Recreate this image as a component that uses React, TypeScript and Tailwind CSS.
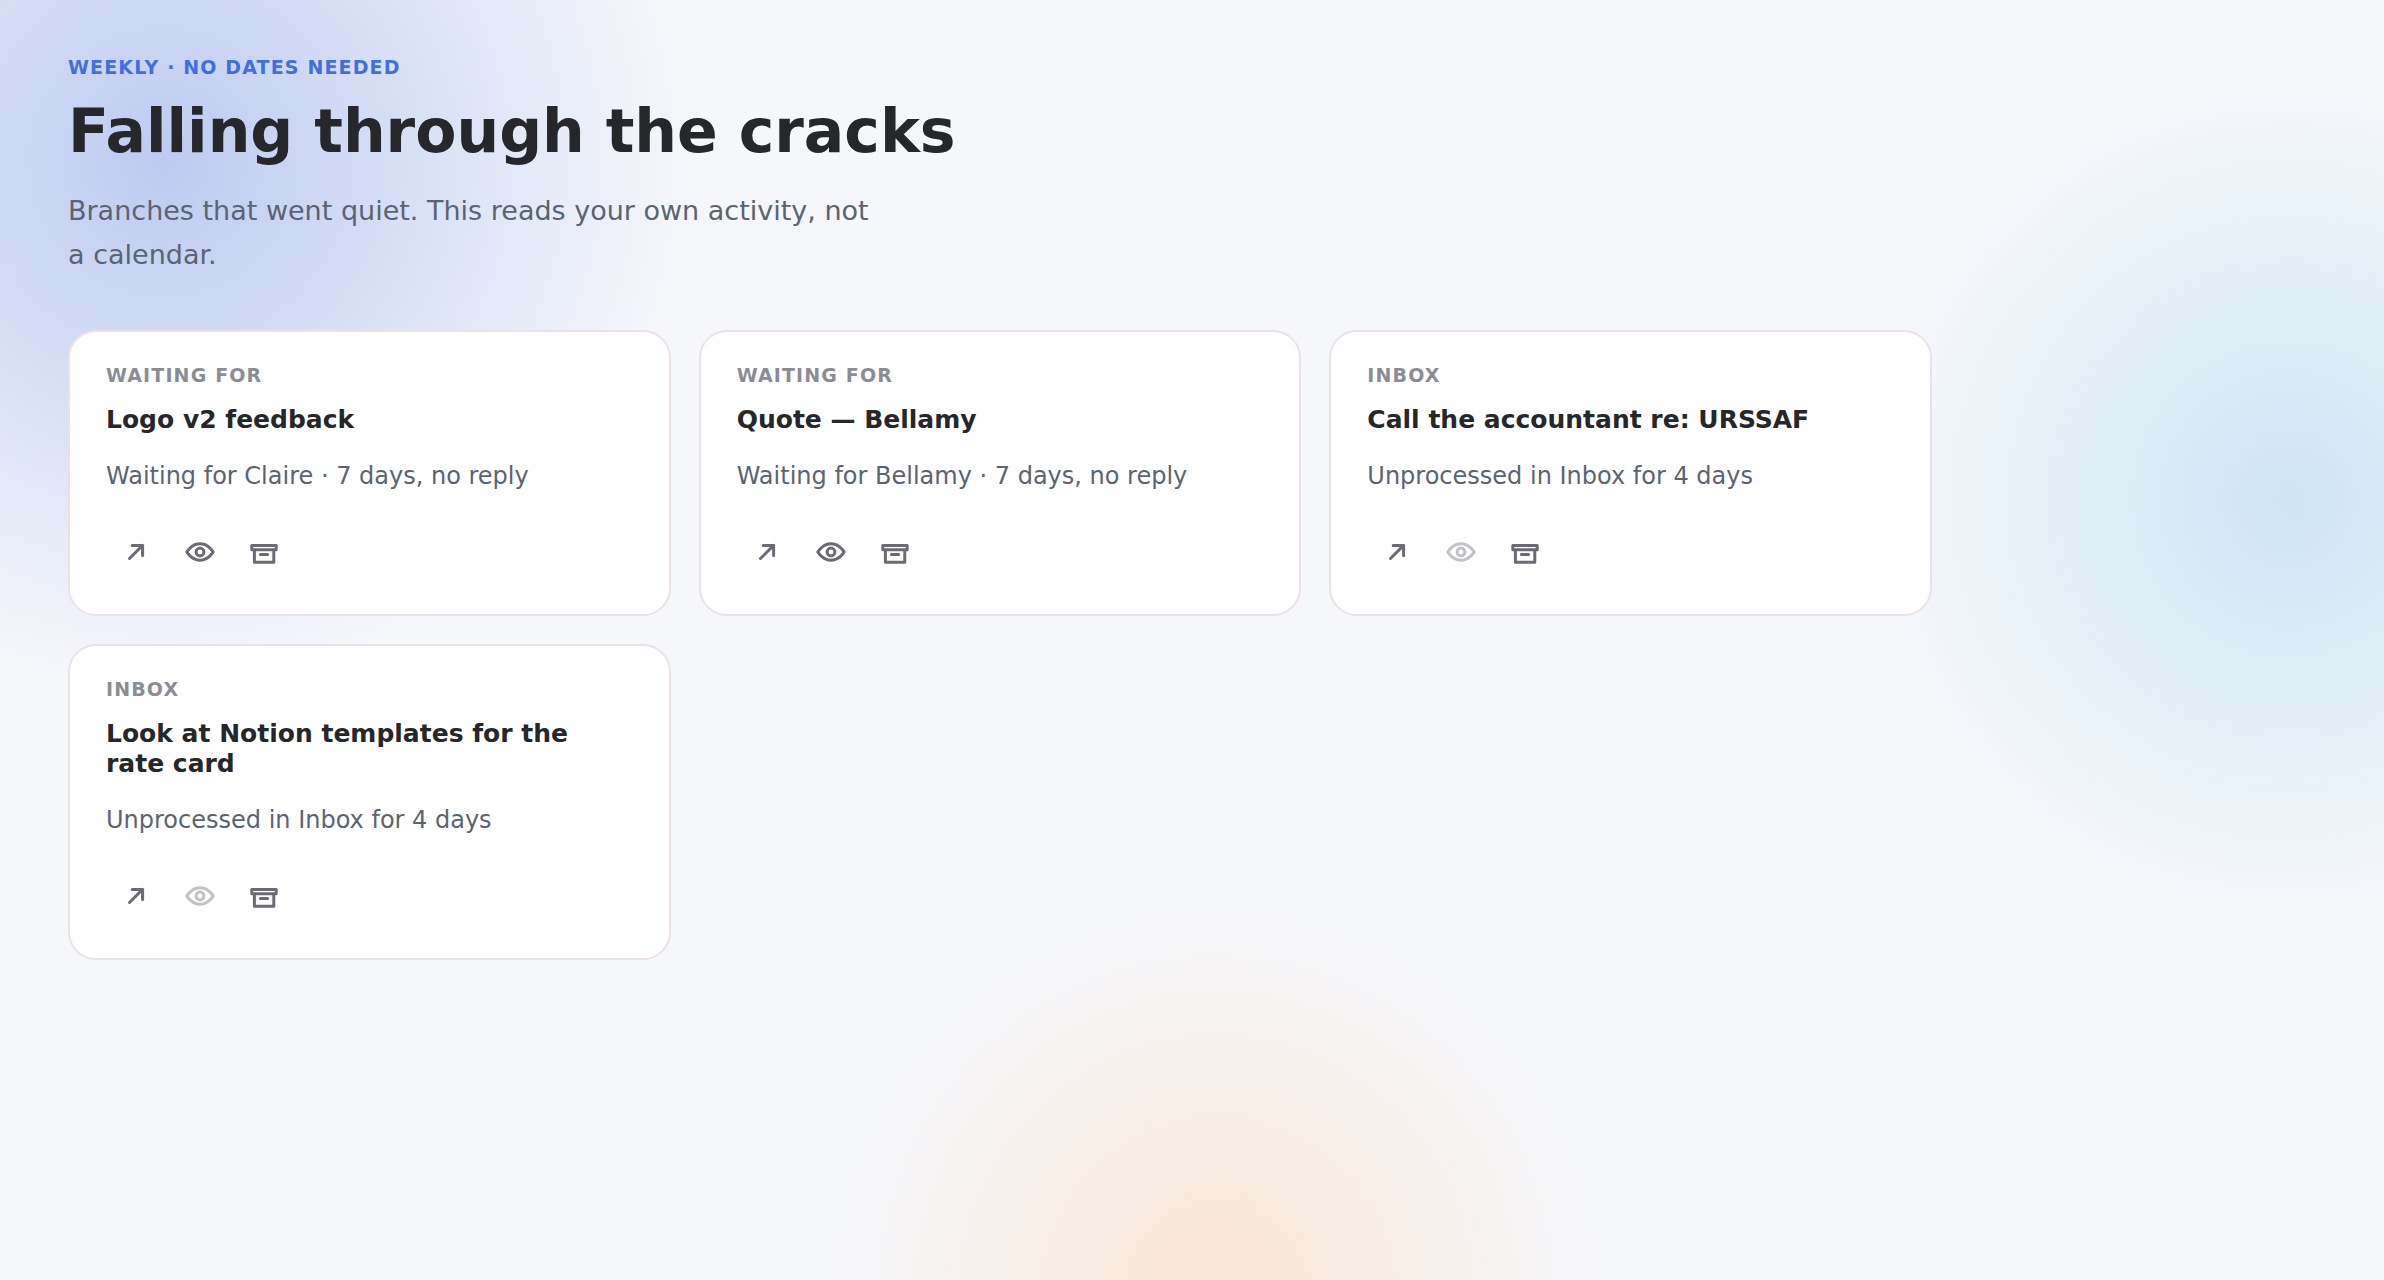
import type { ReactNode } from 'react'

type Item = {
  kind: string
  title: string
  reason: string
  canWatch: boolean
}

const items: Item[] = [
  { kind: 'Waiting for', title: 'Logo v2 feedback', reason: 'Waiting for Claire · 7 days, no reply', canWatch: true },
  { kind: 'Waiting for', title: 'Quote — Bellamy', reason: 'Waiting for Bellamy · 7 days, no reply', canWatch: true },
  { kind: 'Inbox', title: 'Call the accountant re: URSSAF', reason: 'Unprocessed in Inbox for 4 days', canWatch: false },
  {
    kind: 'Inbox',
    title: 'Look at Notion templates for the rate card',
    reason: 'Unprocessed in Inbox for 4 days',
    canWatch: false,
  },
]

function Icon({ children }: { children: ReactNode }) {
  return (
    <svg
      className="size-8"
      viewBox="0 0 16 16"
      fill="none"
      stroke="currentColor"
      strokeWidth="1.5"
      strokeLinecap="round"
      strokeLinejoin="round"
      aria-hidden="true"
    >
      {children}
    </svg>
  )
}

function IconButton({ label, disabled, children }: { label: string; disabled?: boolean; children: ReactNode }) {
  return (
    <button
      type="button"
      aria-label={label}
      disabled={disabled}
      className="size-[60px] flex items-center justify-center rounded-full text-[#6b6b76] cursor-pointer disabled:opacity-40 disabled:cursor-default"
    >
      <Icon>{children}</Icon>
    </button>
  )
}

function ItemCard({ item }: { item: Item }) {
  return (
    <article className="flex flex-col items-start rounded-[28px] border-2 border-[#eee0e8] bg-white px-9 py-8">
      <p className="text-[19px] leading-[22px] font-bold tracking-[0.06em] uppercase text-[#8b8d96]">{item.kind}</p>
      <h2 className="mt-[19px] text-[25px] leading-[30px] font-bold text-[#25272b]">{item.title}</h2>
      <p className="mt-[23px] text-2xl leading-9 text-[#5b6472]">{item.reason}</p>
      <div className="mt-7 flex gap-1">
        <IconButton label="Open">
          <path d="M4.75 11.25 11.3 4.7M6.1 4.7h5.2v5.1" />
        </IconButton>
        <IconButton label="Keep watching" disabled={!item.canWatch}>
          <path d="M1.4 8S3.8 3.9 8 3.9 14.6 8 14.6 8 12.2 12.1 8 12.1 1.4 8 1.4 8Z" />
          <circle cx="8" cy="8" r="1.95" />
        </IconButton>
        <IconButton label="Archive">
          <path d="M1.9 4.7h12.2v2.2H1.9zM3.2 6.9v6.2h9.7V6.9M6.2 9.3h3.6" />
        </IconButton>
      </div>
    </article>
  )
}

export default function App() {
  return (
    <main className="min-h-screen bg-[#f6f7fb] bg-[radial-gradient(circle_at_163px_162px,#bccbf0,transparent_524px),radial-gradient(circle_at_96%_39%,#cce6f2,transparent_422px),radial-gradient(circle_at_51%_101%,#f8e5d4,transparent_378px)] px-17 pt-[54px] pb-16 font-['DejaVu_Sans',sans-serif]">
      <div className="max-w-[1864px]">
        <header>
          <p className="text-[19px] leading-[26px] font-bold tracking-[0.06em] uppercase text-[#416fdc]">
            Weekly · No dates needed
          </p>
          <h1 className="mt-[17px] text-[60px] leading-[68px] font-bold text-[#25272b]">Falling through the cracks</h1>
          <p className="mt-6 max-w-[820px] text-[27px] leading-[44px] text-[#5b6472]">
            Branches that went quiet. This reads your own activity, not a calendar.
          </p>
        </header>
        <section className="mt-[53px] grid grid-cols-3 gap-7">
          {items.map((item) => (
            <ItemCard key={item.title} item={item} />
          ))}
        </section>
      </div>
    </main>
  )
}
